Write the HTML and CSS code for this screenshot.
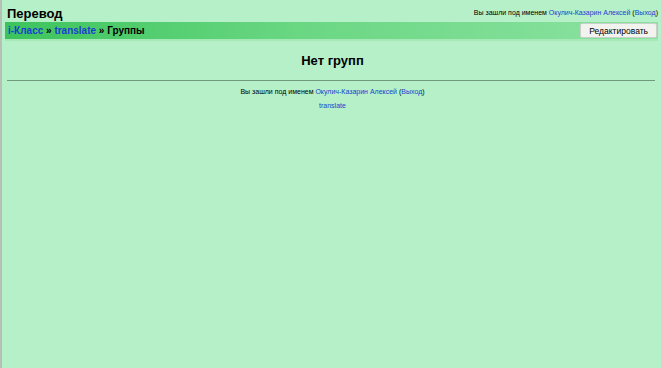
FILE: index.html
```html
<!DOCTYPE html>
<html lang="ru">
<head>
    <meta charset="UTF-8">
    <title>Перевод</title>
    <link rel="stylesheet" href="styles.css">
</head>
<body>
<div class="page">
    <div class="header">
        <h1 class="headermain">Перевод</h1>
        <div class="logininfo">Вы зашли под именем <a href="#">Окулич-Казарин Алексей</a> (<a href="#">Выход</a>)</div>
    </div>
    <div class="navbar">
        <div class="breadcrumb">
            <a href="#">i-Класс</a> » <a href="#">translate</a> » Группы
        </div>
        <button class="button" type="button">Редактировать</button>
    </div>

    <div class="content">
        <h2 class="main">Нет групп</h2>
    </div>

    <div class="footer">
        <hr>
        <div class="logininfo">Вы зашли под именем <a href="#">Окулич-Казарин Алексей</a> (<a href="#">Выход</a>)</div>
        <div class="homelink"><a href="#">translate</a></div>
    </div>
</div>
</body>
</html>
```

FILE: styles.css
```css
html, body {
    margin: 0;
    height: 100%;
}
body {
    font-family: "Liberation Sans", Arial, sans-serif;
    background-color: #b6f0c8;
    color: #000;
}
.page {
    min-height: 100%;
    box-sizing: border-box;
    border-left: 2px solid #b4c2b6;
    padding: 0 3px 0 5px;
}
a {
    color: #1a3fd0;
    text-decoration: none;
}
.header {
    display: flex;
    justify-content: space-between;
    align-items: flex-start;
    height: 22px;
}
.headermain {
    margin: 6px 0 0 0;
    font-size: 13px;
    font-weight: bold;
    line-height: 16px;
}
.logininfo {
    font-size: 7px;
    line-height: 9px;
}
.header .logininfo {
    margin-top: 8px;
}
.navbar {
    display: flex;
    justify-content: space-between;
    align-items: center;
    height: 17px;
    margin-left: -2px;
    padding-left: 3px;
    background: linear-gradient(to right, #3cc45c, #6ad783 45%, #8ce2a1);
    border-bottom: 2px solid #a4e9b6;
}
.breadcrumb {
    font-size: 10px;
    font-weight: bold;
}
.button {
    font-family: "Liberation Sans", Arial, sans-serif;
    font-size: 8.5px;
    height: 15px;
    padding: 0 8px;
    margin-right: 1px;
    background: #f2f2ee;
    border: 1px solid #c9cfc9;
    border-radius: 2px;
    color: #000;
}
.content {
    padding-top: 11px;
}
h2.main {
    margin: 0;
    text-align: center;
    font-size: 13px;
    line-height: 18px;
}
.footer {
    text-align: center;
}
.footer hr {
    margin: 10px 3px 6px 0;
    border: 0;
    border-top: 1px solid #6f9b7c;
    height: 0;
}
.homelink {
    margin-top: 6px;
    font-size: 7px;
}
```
